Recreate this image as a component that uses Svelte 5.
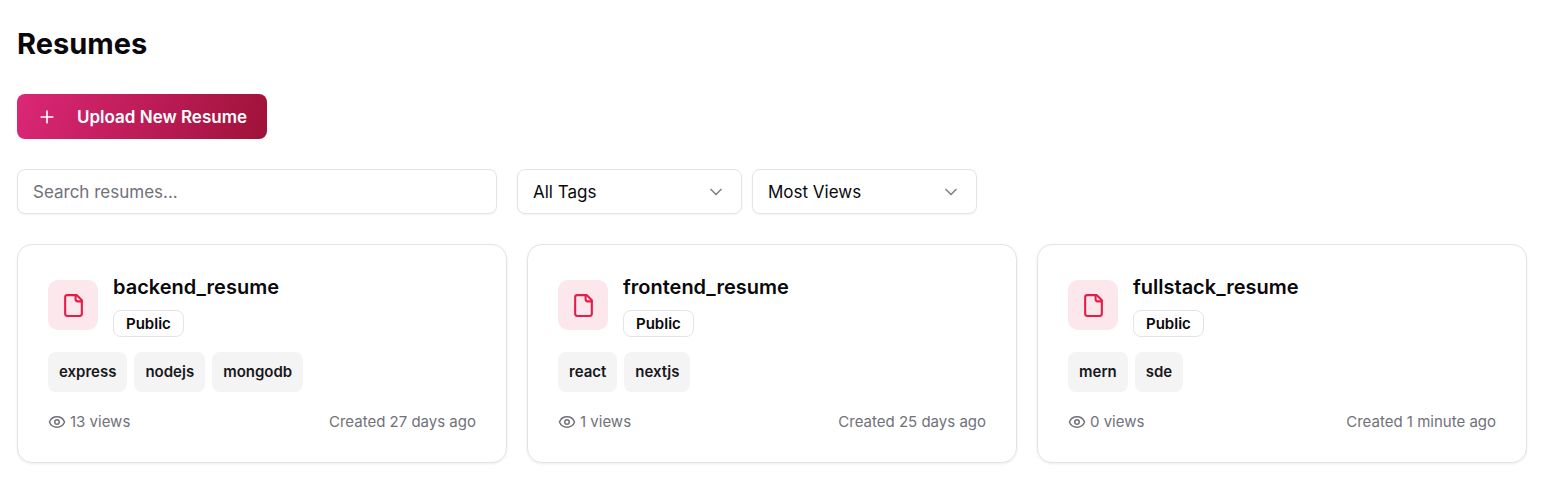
<script>
  let search = $state('');
  let tag = $state('all');
  let sort = $state('views');

  const resumes = [
    { name: 'backend_resume', tags: ['express', 'nodejs', 'mongodb'], views: 13, created: '27 days ago' },
    { name: 'frontend_resume', tags: ['react', 'nextjs'], views: 1, created: '25 days ago' },
    { name: 'fullstack_resume', tags: ['mern', 'sde'], views: 0, created: '1 minute ago' }
  ];

  const allTags = resumes.flatMap((r) => r.tags);

  const shown = $derived(
    resumes
      .filter((r) => r.name.includes(search.toLowerCase()) && (tag === 'all' || r.tags.includes(tag)))
      .sort((a, b) => (sort === 'views' ? b.views - a.views : a.name.localeCompare(b.name)))
  );
</script>

{#snippet chevron()}
  <svg class="chevron" viewBox="0 0 24 24" aria-hidden="true"><path d="m6 9 6 6 6-6" /></svg>
{/snippet}

<main>
  <h1>Resumes</h1>

  <button class="upload" type="button">
    <svg viewBox="0 0 24 24" aria-hidden="true"><path d="M5 12h14M12 5v14" /></svg>
    <span>Upload New Resume</span>
  </button>

  <div class="filters">
    <input class="search" type="text" placeholder="Search resumes..." aria-label="Search resumes" bind:value={search} />
    <div class="selects">
      <div class="select">
        <select aria-label="Filter by tag" bind:value={tag}>
          <option value="all">All Tags</option>
          {#each allTags as t}
            <option value={t}>{t}</option>
          {/each}
        </select>
        {@render chevron()}
      </div>
      <div class="select">
        <select aria-label="Sort by" bind:value={sort}>
          <option value="views">Most Views</option>
          <option value="name">Name</option>
        </select>
        {@render chevron()}
      </div>
    </div>
  </div>

  <div class="grid">
    {#each shown as resume (resume.name)}
      <article class="card">
        <header>
          <div class="file">
            <svg viewBox="0 0 24 24" aria-hidden="true">
              <path d="M15 2H6a2 2 0 0 0-2 2v16a2 2 0 0 0 2 2h12a2 2 0 0 0 2-2V7Z" />
              <path d="M14 2v4a2 2 0 0 0 2 2h4" />
            </svg>
          </div>
          <div class="heading">
            <h2>{resume.name}</h2>
            <span class="badge">Public</span>
          </div>
        </header>
        <ul class="tags">
          {#each resume.tags as t}
            <li>{t}</li>
          {/each}
        </ul>
        <footer>
          <span class="views">
            <svg viewBox="0 0 24 24" aria-hidden="true">
              <path d="M2.062 12.348a1 1 0 0 1 0-.696 10.75 10.75 0 0 1 19.876 0 1 1 0 0 1 0 .696 10.75 10.75 0 0 1-19.876 0" />
              <circle cx="12" cy="12" r="3" />
            </svg>
            {resume.views} views
          </span>
          <span>Created {resume.created}</span>
        </footer>
      </article>
    {/each}
  </div>
</main>

<style>
  :global(body) {
    margin: 0;
    background: #fff;
  }

  main {
    padding: 24px 26px 24px 17px;
    color: #09090b;
    font-family: Inter, 'Liberation Sans', sans-serif;
    font-size: 17px;
    line-height: 24px;
  }

  main,
  main * {
    box-sizing: border-box;
  }

  svg {
    flex: none;
    fill: none;
    stroke: currentColor;
    stroke-width: 2;
    stroke-linecap: round;
    stroke-linejoin: round;
  }

  h1,
  h2 {
    margin: 0;
  }

  h1 {
    font-size: 29px;
    font-weight: 700;
    line-height: 40px;
  }

  .upload {
    display: flex;
    align-items: center;
    gap: 20px;
    height: 45px;
    margin: 30px 0;
    padding: 0 20px;
    border: 0;
    border-radius: 8px;
    background: linear-gradient(110deg, #db2777, #9f1239);
    color: #fff;
    font: 600 17px/24px Inter, 'Liberation Sans', sans-serif;
    cursor: pointer;
  }

  .upload svg {
    width: 20px;
    height: 20px;
  }

  .filters {
    display: flex;
    flex-wrap: wrap;
    gap: 20px;
    margin-bottom: 30px;
  }

  .search,
  select {
    height: 45px;
    padding: 0 15px;
    border: 1px solid #e4e4e7;
    border-radius: 8px;
    background: #fff;
    box-shadow: 0 1px 2px rgb(0 0 0 / 5%);
    color: #09090b;
    font: 400 17px/24px Inter, 'Liberation Sans', sans-serif;
  }

  .search {
    flex: 0 1 480px;
    min-width: 0;
  }

  .search::placeholder {
    color: #71717a;
    opacity: 1;
  }

  .selects {
    display: flex;
    gap: 10px;
  }

  .select {
    display: grid;
    grid-template-columns: 225px;
    align-items: center;
  }

  select,
  .chevron {
    grid-area: 1 / 1;
  }

  select {
    appearance: none;
    width: 100%;
  }

  .chevron {
    width: 20px;
    height: 20px;
    margin-right: 16px;
    justify-self: end;
    color: #848486;
    pointer-events: none;
  }

  .grid {
    display: grid;
    grid-template-columns: repeat(auto-fill, minmax(400px, 1fr));
    gap: 20px;
  }

  .card {
    padding: 30px;
    border: 1px solid #e4e4e7;
    border-radius: 15px;
    background: #fff;
    box-shadow: 0 1px 3px rgb(0 0 0 / 8%);
  }

  header {
    display: flex;
    align-items: flex-start;
    gap: 15px;
  }

  .file {
    display: grid;
    flex: none;
    place-items: center;
    width: 50px;
    height: 50px;
    margin-top: 5px;
    border-radius: 10px;
    background: #fce7ec;
    color: #e11d48;
  }

  .file svg {
    width: 25px;
    height: 25px;
  }

  .heading {
    display: flex;
    flex-direction: column;
    align-items: flex-start;
    gap: 10px;
  }

  h2 {
    font-size: 20px;
    font-weight: 600;
    line-height: 25px;
  }

  .badge {
    padding: 0 12px;
    border: 1px solid #e4e4e7;
    border-radius: 8px;
    font-size: 15px;
    font-weight: 600;
    line-height: 25px;
  }

  .tags {
    display: flex;
    flex-wrap: wrap;
    gap: 7px;
    margin: 15px 0 20px;
    padding: 0;
    list-style: none;
  }

  .tags li {
    padding: 0 11px;
    border-radius: 8px;
    background: #f4f4f5;
    color: #18181b;
    font-size: 15px;
    font-weight: 600;
    line-height: 40px;
  }

  footer {
    display: flex;
    justify-content: space-between;
    color: #71717a;
    font-size: 15px;
    line-height: 20px;
  }

  .views {
    display: flex;
    align-items: center;
    gap: 4px;
  }

  .views svg {
    width: 18px;
    height: 18px;
  }
</style>
